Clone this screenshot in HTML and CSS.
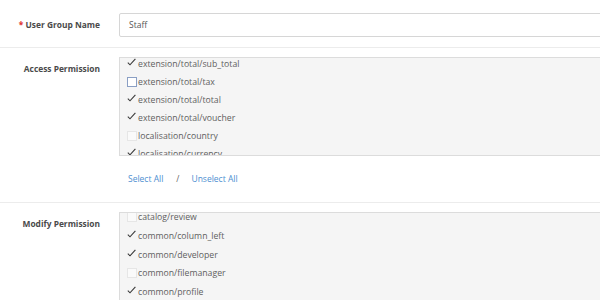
FILE: index.html
```html
<!DOCTYPE html>
<html>
<head>
<meta charset="utf-8">
<link rel="stylesheet" href="styles.css">
</head>
<body>
<div class="form">
  <div class="row first">
    <div class="label"><span class="req">*</span> User Group Name</div>
    <div class="field"><div class="input">Staff</div></div>
  </div>
  <div class="row">
    <div class="label top">Access Permission</div>
    <div class="field">
      <div class="well">
        <div class="item"><span class="chk on"><svg viewBox="0 0 9 8" width="9" height="8"><path d="M0.8 4.6 L3 6.8 L8.4 0.8"/></svg></span>extension/total/sub_total</div>
        <div class="item"><span class="chk focus"></span>extension/total/tax</div>
        <div class="item"><span class="chk on"><svg viewBox="0 0 9 8" width="9" height="8"><path d="M0.8 4.6 L3 6.8 L8.4 0.8"/></svg></span>extension/total/total</div>
        <div class="item"><span class="chk on"><svg viewBox="0 0 9 8" width="9" height="8"><path d="M0.8 4.6 L3 6.8 L8.4 0.8"/></svg></span>extension/total/voucher</div>
        <div class="item"><span class="chk off"></span>localisation/country</div>
        <div class="item"><span class="chk on"><svg viewBox="0 0 9 8" width="9" height="8"><path d="M0.8 4.6 L3 6.8 L8.4 0.8"/></svg></span>localisation/currency</div>
      </div>
      <div class="links"><a>Select All</a><span class="slash">/</span><a>Unselect All</a></div>
    </div>
  </div>
  <div class="row">
    <div class="label top">Modify Permission</div>
    <div class="field">
      <div class="well tall">
        <div class="item"><span class="chk off"></span>catalog/review</div>
        <div class="item"><span class="chk on"><svg viewBox="0 0 9 8" width="9" height="8"><path d="M0.8 4.6 L3 6.8 L8.4 0.8"/></svg></span>common/column_left</div>
        <div class="item"><span class="chk on"><svg viewBox="0 0 9 8" width="9" height="8"><path d="M0.8 4.6 L3 6.8 L8.4 0.8"/></svg></span>common/developer</div>
        <div class="item"><span class="chk off"></span>common/filemanager</div>
        <div class="item"><span class="chk on"><svg viewBox="0 0 9 8" width="9" height="8"><path d="M0.8 4.6 L3 6.8 L8.4 0.8"/></svg></span>common/profile</div>
      </div>
    </div>
  </div>
</div>
</body>
</html>
```

FILE: styles.css
```css
html, body { margin: 0; padding: 0; background: #fff; overflow: hidden; }
body { width: 600px; height: 300px; font-family: "Open Sans", "DejaVu Sans", sans-serif; font-size: 8.5px; color: #666; }
.form { width: 700px; }
.row { display: flex; border-top: 1px solid #ececec; padding: 9px 0 10px; }
.row.first { border-top: none; padding: 13px 0 10px; }
.label { width: 100px; flex: none; text-align: right; font-weight: bold; color: #4a4a4a; font-size: 8.4px; line-height: 24px; }
.label.top { line-height: 23px; }
.req { color: #e0312c; }
.field { margin-left: 19px; flex: 1; }
.input { height: 22px; border: 1px solid #d6d6d6; border-radius: 2px; padding-left: 9px; line-height: 22px; color: #555; font-size: 8.5px; }
.well { height: 97px; overflow: hidden; background: #f5f5f5; border: 1px solid #dcdcdc; padding-left: 7px; }
.well.tall { height: 120px; }
.item { height: 18px; line-height: 14px; display: flex; align-items: flex-start; color: #606060; white-space: nowrap; font-size: 8.7px; }
.well .item:first-child { margin-top: -1px; }
.tall .item { height: 18.75px; }
.tall .item:first-child { margin-top: -3px; }
.chk { width: 10px; height: 10px; flex: none; margin-right: 1px; box-sizing: border-box; margin-top: 2px; }
.chk.on { margin-top: 1px; }
.chk.on svg { display: block; fill: none; stroke: #3a3a3a; stroke-width: 1.1; }
.chk.off { border: 1px solid #e6e6e6; background: #fafafa; }
.chk.focus { border: 1px solid #8a9fc4; background: #fff; }
.links { padding: 16px 0 0 9px; height: 20px; line-height: 14px; font-size: 8.5px; }
.links a { color: #4d8fd1; }
.slash { color: #666; margin: 0 12px 0 13px; }
```
